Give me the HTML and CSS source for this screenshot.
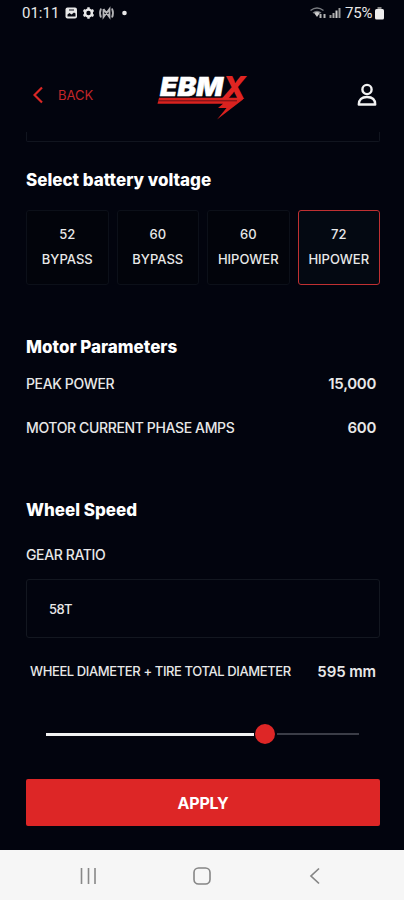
FILE: index.html
```html
<!DOCTYPE html>
<html lang="en">
<head>
	<meta charset="UTF-8">
	<meta name="viewport" content="width=device-width, initial-scale=1">
	<title>EBMX</title>
	<link rel="stylesheet" href="styles.css">
</head>
<body>
	<div class="statusbar">
		<span class="time">01:11</span>
		<svg class="status-left" width="66" height="14" viewBox="0 0 66 14">
			<rect x="0.5" y="1.5" width="11.5" height="11" rx="2" fill="#e8e8e8"/>
			<path d="M2.5 10.5V8.5l2-1.5 2 1.5L9 6.5l1.5 1v3z" fill="#090b14"/>
			<path d="M4 4h5" stroke="#090b14"/>
			<circle cx="23.5" cy="7" r="3.4" fill="none" stroke="#e8e8e8" stroke-width="2.4"/>
			<path d="M23.5 1.2v2M23.5 10.8v2M18.5 4.1l1.7 1M26.8 8.9l1.7 1M28.5 4.1l-1.7 1M20.2 8.9l-1.7 1" stroke="#e8e8e8" stroke-width="2.4"/>
			<path d="M36 2.5q-2 4.5 0 9M47 2.5q2 4.5 0 9M38.5 3v8l6-8v8l-6-8" fill="none" stroke="#b5b5b8" stroke-width="1.8"/>
			<circle cx="59.5" cy="7" r="2.3" fill="#e8e8e8"/>
		</svg>
		<svg class="status-right" width="31" height="14" viewBox="0 0 31 14">
			<path d="M0.5 4.5q6.5-5 13 0M3 7q4-3 8 0" fill="none" stroke="#777a7f" stroke-width="1.5"/>
			<path d="M4 6.8q3-1.8 6 0L7 11z" fill="#cfcfcf"/>
			<path d="M10.5 12V8M14.5 12V8" stroke="#b5b5b5" stroke-width="2"/>
			<path d="M20.5 12v-3" stroke="#999" stroke-width="2"/>
			<path d="M23.5 12V7" stroke="#aaa" stroke-width="2"/>
			<path d="M26.5 12V4.5" stroke="#ccc" stroke-width="2"/>
			<path d="M29.5 12V2" stroke="#999" stroke-width="2"/>
		</svg>
		<span class="percent">75%</span>
		<svg class="battery" width="9" height="13" viewBox="0 0 9 13">
			<path d="M2.5 0h4v2h-4z" fill="#888"/>
			<rect y="2" width="9" height="10.5" rx="1.5" fill="#eee"/>
		</svg>
	</div>

	<header class="header">
		<a class="back" href="#">
			<svg width="10" height="18" viewBox="0 0 10 18"><path d="M9 1.5L1.5 9 9 16.5" fill="none" stroke="#da2725" stroke-width="2.2"/></svg>
			<span>BACK</span>
		</a>
		<svg class="logo" width="96" height="62" viewBox="0 -14 96 62">
			<path d="M2 22.7H86V24.5L60 44.5l9.5-11.5H61l5-4.3H0.5z" fill="#d9221f"/>
			<path d="M1 25.8H80" stroke="#5c1015" stroke-width="0.9"/>
			<text class="logo-text" x="3" y="20.7" textLength="63" lengthAdjust="spacingAndGlyphs">EBM</text>
			<text class="logo-text logo-x" transform="translate(65 23.5) scale(1 1.22)" textLength="24" lengthAdjust="spacingAndGlyphs">X</text>
		</svg>
		<svg class="user" width="20" height="24" viewBox="0 0 20 24">
			<circle cx="10" cy="6.5" r="4.6" fill="none" stroke="#f2f2f2" stroke-width="2.4"/>
			<path d="M1.8 21.5c0-5 3-7.5 8.2-7.5s8.2 2.5 8.2 7.5z" fill="none" stroke="#f2f2f2" stroke-width="2.4" stroke-linejoin="round"/>
		</svg>
	</header>

	<main class="content">
		<div class="panel-end"></div>

		<h2 class="title">Select battery voltage</h2>
		<div class="voltages">
			<button class="voltage"><span>52</span><span>BYPASS</span></button>
			<button class="voltage"><span>60</span><span>BYPASS</span></button>
			<button class="voltage"><span>60</span><span>HIPOWER</span></button>
			<button class="voltage active"><span>72</span><span>HIPOWER</span></button>
		</div>

		<h2 class="title title-motor">Motor Parameters</h2>
		<div class="row"><span>PEAK POWER</span><b>15,000</b></div>
		<div class="row row-amps"><span>MOTOR CURRENT PHASE AMPS</span><b>600</b></div>

		<h2 class="title title-wheel">Wheel Speed</h2>
		<div class="label">GEAR RATIO</div>
		<div class="field">58T</div>
		<div class="row row-wheel"><span>WHEEL DIAMETER + TIRE TOTAL DIAMETER</span><b>595 mm</b></div>
		<div class="slider">
			<div class="fill"></div>
			<div class="thumb"></div>
			<div class="rest"></div>
		</div>
		<button class="apply">APPLY</button>
	</main>

	<nav class="navbar">
		<svg width="18" height="18" viewBox="0 0 18 18"><path d="M2.5 1v16M9.5 1v16M16 1v16" stroke="#888" stroke-width="1.6"/></svg>
		<svg width="18" height="18" viewBox="0 0 18 18"><rect x="1" y="1" width="16" height="16" rx="4.5" fill="none" stroke="#858585" stroke-width="1.6"/></svg>
		<svg width="18" height="18" viewBox="0 0 18 18"><path d="M13 1.5L5 9l8 7.5" fill="none" stroke="#858585" stroke-width="1.7"/></svg>
	</nav>
</body>
</html>
```
FILE: styles.css
```css
* {
	padding: 0;
	margin: 0;
	box-sizing: border-box;
}
body {
	height: 900px;
	display: flex;
	flex-direction: column;
	background: #02040e;
	color: #e8e8e8;
	font-family: Inter, "Liberation Sans", sans-serif;
	font-size: 13px;
	overflow: hidden;
}
svg {
	display: block;
	flex: none;
}
button {
	font: inherit;
	color: inherit;
	border: 0;
}

/* status bar */
.statusbar {
	height: 26px;
	padding: 0 20px 0 22px;
	display: flex;
	align-items: center;
	font-family: Roboto, sans-serif;
	font-size: 15px;
}
.time {
	width: 43px;
}
.status-right {
	margin-left: auto;
}
.percent {
	width: 29px;
	margin: 0 1px 0 4px;
	letter-spacing: -0.2px;
}

/* header */
.header {
	height: 106px;
	padding: 0 27px 0 33px;
	display: flex;
	align-items: flex-start;
}
.back {
	width: 124px;
	margin-top: 60px;
	display: flex;
	align-items: center;
	gap: 15px;
	color: #c22628;
	text-decoration: none;
}
.logo {
	margin-top: 35px;
}
.logo-text {
	font: italic 900 26px Inter, sans-serif;
	fill: #fff;
	stroke: #fff;
	stroke-width: 0.5px;
}
.logo-x {
	font-weight: 800;
	fill: #e02522;
	stroke: none;
}
.user {
	margin: 57px 0 0 auto;
}

/* content */
.content {
	height: 718px;
	padding: 0 24px 0 26px;
}
.panel-end {
	height: 10px;
	border: 1px solid #11151f;
	border-top: 0;
	border-radius: 0 0 2px 2px;
}
.title {
	margin-top: 26px;
	font-size: 17px;
	line-height: 24px;
	font-weight: 800;
	color: #fff;
}
.title-motor {
	margin-top: 50px;
}
.title-wheel {
	margin-top: 59px;
}
.voltages {
	margin-top: 18px;
	display: grid;
	grid-template-columns: repeat(4, 1fr);
	gap: 8px;
}
.voltage {
	height: 75px;
	padding-bottom: 2px;
	display: flex;
	flex-direction: column;
	align-items: center;
	justify-content: center;
	background: #02040b;
	border: 1px solid #0c1019;
	border-radius: 3px;
	line-height: 25px;
	font-weight: 500;
}
.voltage.active {
	background: #040912;
	border-color: #c03032;
}
.row {
	height: 24px;
	margin-top: 12px;
	padding-right: 4px;
	display: flex;
	align-items: center;
	justify-content: space-between;
	white-space: nowrap;
	font-size: 14px;
	font-weight: 500;
	letter-spacing: -0.37px;
}
.row b {
	font-size: 15px;
	font-weight: 600;
	letter-spacing: -0.3px;
}
.row-amps {
	margin-top: 20px;
}
.label {
	margin-top: 21px;
	line-height: 24px;
	font-size: 14px;
	font-weight: 500;
	letter-spacing: -0.37px;
}
.field {
	height: 59px;
	margin-top: 12px;
	padding-left: 22px;
	border: 1px solid #131720;
	border-radius: 3px;
	line-height: 58px;
	font-weight: 500;
	letter-spacing: -0.6px;
}
.row-wheel {
	margin-top: 21px;
	padding-left: 4px;
	font-size: 13px;
	letter-spacing: -0.39px;
}
.row-wheel b {
	letter-spacing: -0.1px;
}
.slider {
	height: 20px;
	margin: 41px 21px 0 20px;
	display: flex;
	align-items: center;
}
.fill {
	width: 208px;
	height: 3px;
	background: #f2f2f2;
}
.thumb {
	width: 20px;
	height: 20px;
	margin: 0 2px 0 1px;
	border-radius: 50%;
	background: #de2626;
}
.rest {
	flex: 1;
	height: 2px;
	background: #3b3d47;
}
.apply {
	width: 100%;
	height: 47px;
	margin-top: 35px;
	display: block;
	border-radius: 2px;
	background: #dd2626;
	color: #fff;
	font-size: 16px;
	font-weight: 700;
	letter-spacing: -0.2px;
}

/* android navigation */
.navbar {
	height: 50px;
	padding: 1px 80px 0 79px;
	display: flex;
	align-items: center;
	justify-content: space-between;
	background: #f6f6f6;
}
```
